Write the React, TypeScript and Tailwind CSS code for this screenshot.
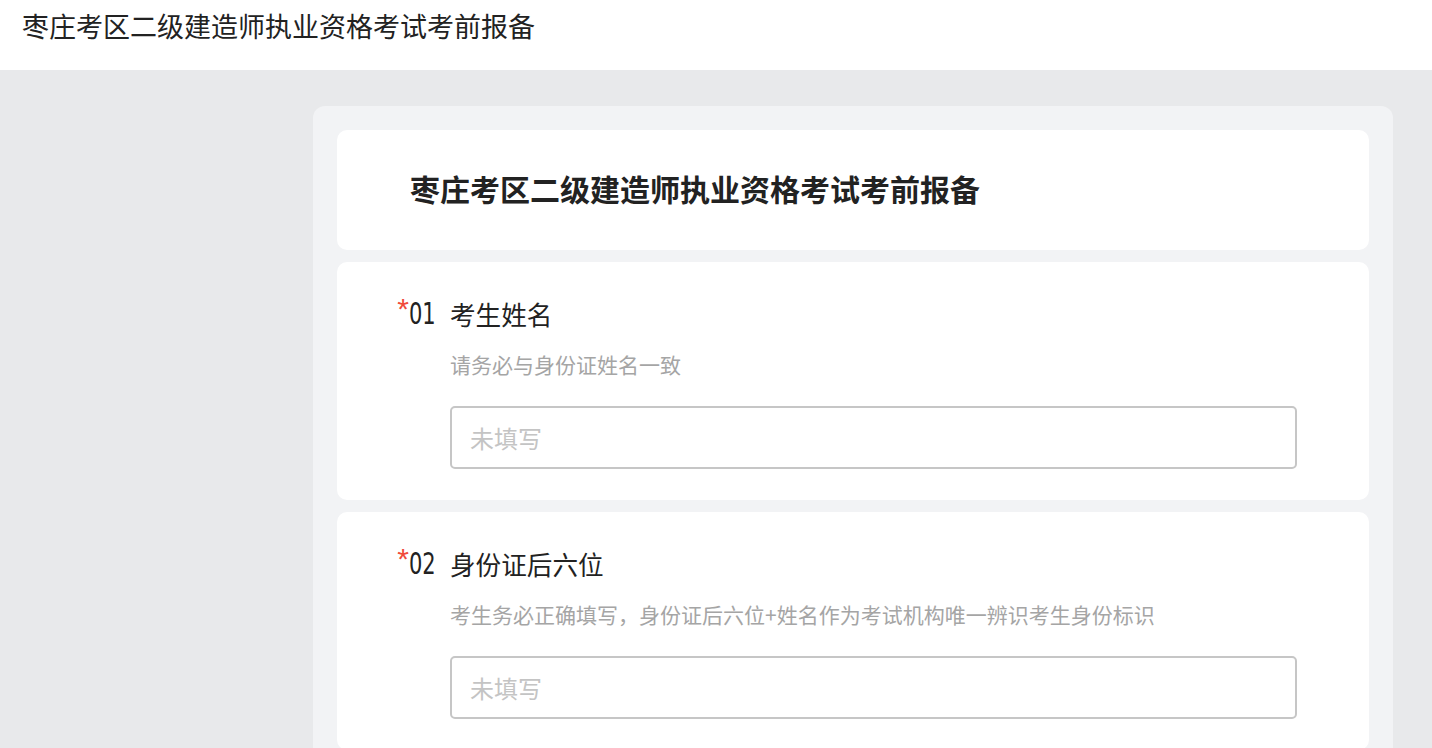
import React from "react";

const questions = [
  { no: "01", title: "考生姓名", desc: "请务必与身份证姓名一致" },
  {
    no: "02",
    title: "身份证后六位",
    desc: "考生务必正确填写，身份证后六位+姓名作为考试机构唯一辨识考生身份标识",
  },
  { no: "03", title: "联系电话", desc: "请填写本人常用手机号码" },
];

const cjk = "font-['Microsoft_YaHei','Noto_Sans_CJK_SC',sans-serif]";

export default function App() {
  return (
    <div className={`min-h-screen bg-[#e8e9eb] ${cjk}`}>
      <header className="h-[70px] bg-white pl-[22px] pt-[6px]">
        <h1 className="text-[27px] leading-[40px] text-[#222]">枣庄考区二级建造师执业资格考试考前报备</h1>
      </header>

      <main className="pt-[36px] pl-[313px]">
        <div className="w-[1080px] rounded-[12px] bg-[#f2f3f5] px-[24px] pt-[24px] pb-[24px]">
          <div className="flex h-[120px] items-center rounded-[10px] bg-white pl-[73px]">
            <h2 className="-mt-[4px] text-[30px] font-bold leading-[40px] text-[#222]">
              枣庄考区二级建造师执业资格考试考前报备
            </h2>
          </div>

          <div className="mt-[12px] flex flex-col gap-[12px]">
            {questions.map((q) => (
              <div key={q.no} className="h-[238px] rounded-[10px] bg-white pt-[32px] pl-[59px] pr-[72px]">
                <div className="flex items-center leading-[36px]">
                  <span className="w-[13px] self-start text-right font-['Liberation_Sans',sans-serif] text-[30px] leading-[30px] text-[#f04a3a]">
                    *
                  </span>
                  <span className="w-[41px] overflow-visible">
                    <span className="inline-block origin-left translate-y-[2px] scale-x-[0.7] font-['DejaVu_Sans',sans-serif] text-[30px] leading-[36px] text-[#222]">
                      {q.no}
                    </span>
                  </span>
                  <span className="text-[25.6px] text-[#222]">{q.title}</span>
                </div>
                <p className="mt-[16px] pl-[54px] text-[21px] leading-[30px] text-[#a5a5a5]">{q.desc}</p>
                <div className="ml-[54px] mt-[27px] flex h-[63px] items-center rounded-[5px] border-2 border-[#c6c6c6] px-[18px]">
                  <span className="text-[24px] text-[#c4c4c4]">未填写</span>
                </div>
              </div>
            ))}
          </div>
        </div>
      </main>
    </div>
  );
}
